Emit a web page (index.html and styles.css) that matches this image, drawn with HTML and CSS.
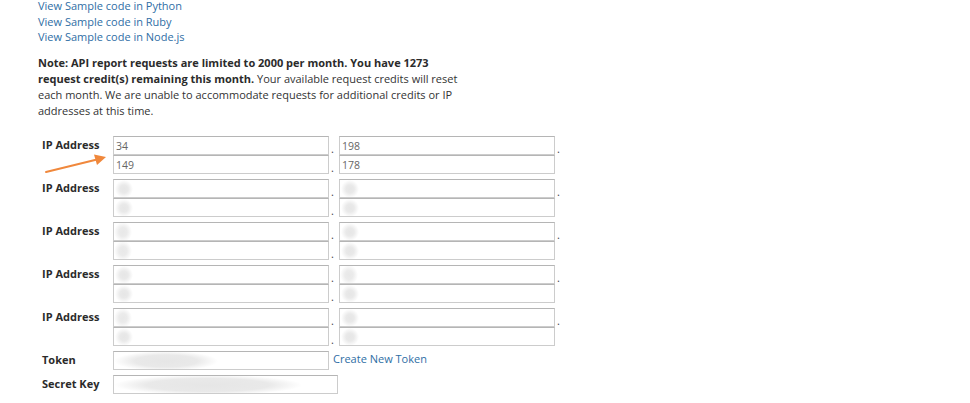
FILE: index.html
```html
<!DOCTYPE html>
<html>
<head>
<meta charset="utf-8">
<link rel="stylesheet" href="styles.css">
</head>
<body>
<div class="page">
  <div class="links">
    <a href="#">View Sample code in Python</a>
    <a href="#">View Sample code in Ruby</a>
    <a href="#">View Sample code in Node.js</a>
  </div>
  <p class="note"><b>Note: API report requests are limited to 2000 per month. You have 1273 request credit(s) remaining this month.</b> Your available request credits will reset each month. We are unable to accommodate requests for additional credits or IP addresses at this time.</p>

  <div class="form">
    <svg class="arrow" width="70" height="24" viewBox="0 0 70 24">
      <line x1="3" y1="19" x2="56" y2="6" stroke="#f0883c" stroke-width="2" stroke-linecap="round"/>
      <path d="M51 1.5 L63 4 L54 12 Z" fill="#f0883c"/>
    </svg>

    <div class="row">
      <div class="label">IP Address</div>
      <div class="ip">
        <input class="field" value="34"><span class="dot">.</span>
        <input class="field" value="198"><span class="dot">.</span>
        <input class="field" value="149"><span class="dot">.</span>
        <input class="field" value="178">
      </div>
    </div>

    <div class="row">
      <div class="label">IP Address</div>
      <div class="ip">
        <input class="field blob"><span class="dot">.</span>
        <input class="field blob"><span class="dot">.</span>
        <input class="field blob"><span class="dot">.</span>
        <input class="field blob">
      </div>
    </div>

    <div class="row">
      <div class="label">IP Address</div>
      <div class="ip">
        <input class="field blob blob-sm"><span class="dot">.</span>
        <input class="field blob"><span class="dot">.</span>
        <input class="field blob blob-sm"><span class="dot">.</span>
        <input class="field blob">
      </div>
    </div>

    <div class="row">
      <div class="label">IP Address</div>
      <div class="ip">
        <input class="field blob"><span class="dot">.</span>
        <input class="field blob blob-sm"><span class="dot">.</span>
        <input class="field blob"><span class="dot">.</span>
        <input class="field blob">
      </div>
    </div>

    <div class="row">
      <div class="label">IP Address</div>
      <div class="ip">
        <input class="field blob blob-sm"><span class="dot">.</span>
        <input class="field blob"><span class="dot">.</span>
        <input class="field blob"><span class="dot">.</span>
        <input class="field blob">
      </div>
    </div>

    <div class="row">
      <div class="label">Token</div>
      <div class="single">
        <input class="field token-field">
        <a href="#" class="create">Create New Token</a>
      </div>
    </div>

    <div class="row">
      <div class="label">Secret Key</div>
      <div class="single">
        <input class="field secret-field">
      </div>
    </div>

    <div class="row">
      <div class="label">Search Active</div>
      <div class="single check-line">
        <span class="check"></span>
        <span class="check-text">Transaction Summary</span>
      </div>
    </div>
  </div>
</div>
</body>
</html>
```

FILE: styles.css
```css
html, body {
  margin: 0;
  padding: 0;
  background: #ffffff;
  overflow: hidden;
}

body {
  font-family: "Open Sans", "Liberation Sans", sans-serif;
  font-size: 11px;
  line-height: 15.7px;
  color: #333333;
}

.page {
  padding-left: 38px;
  margin-top: -2px;
}

.links {
  display: flex;
  flex-direction: column;
}

.links a {
  color: #2f6ea5;
  text-decoration: none;
}

.note {
  width: 434px;
  margin: 10px 0 0 0;
  line-height: 16px;
}

.note b {
  font-weight: 700;
  color: #2b2b2b;
}

.form {
  position: relative;
  margin-top: 17px;
  padding-left: 4px;
  display: flex;
  flex-direction: column;
  gap: 5px;
}

.arrow {
  position: absolute;
  left: 5px;
  top: 17px;
}

.row {
  display: flex;
  align-items: flex-start;
}

.label {
  width: 71px;
  flex: none;
  font-weight: 700;
  color: #2b2b2b;
  line-height: 16px;
  padding-top: 1px;
}

.ip {
  display: flex;
  flex-wrap: wrap;
  width: 460px;
  align-items: flex-end;
}

.field {
  box-sizing: border-box;
  width: 216px;
  height: 19px;
  margin: 0;
  padding: 0 2px;
  border: 1px solid #cccccc;
  border-top-color: #b5b5b5;
  border-radius: 0;
  font-family: "Open Sans", "Liberation Sans", sans-serif;
  font-size: 10.5px;
  color: #666666;
  background: #ffffff;
  outline: none;
}

.dot {
  width: 10px;
  flex: none;
  padding-left: 2px;
  box-sizing: border-box;
  font-size: 11px;
  line-height: 11px;
  color: #444444;
  margin-bottom: 1px;
}

.blob {
  background: radial-gradient(circle at 10px 9px, #e6e6e6 0, #e9e9e9 4px, rgba(240,240,240,0) 9px) no-repeat #ffffff;
}

.blob-sm {
  background: radial-gradient(ellipse 9px 10px at 9px 9px, #e8e8e8 0, #ebebeb 45%, rgba(240,240,240,0) 100%) no-repeat #ffffff;
}

.single {
  display: flex;
  align-items: center;
  gap: 4px;
}

.token-field {
  width: 216px;
  background: radial-gradient(ellipse 52px 10px at 52px 9px, #e6e6e6 0, #e9e9e9 60%, rgba(240,240,240,0) 100%) no-repeat #ffffff;
}

.secret-field {
  width: 225px;
  background: radial-gradient(ellipse 94px 10px at 94px 9px, #e6e6e6 0, #e9e9e9 65%, rgba(240,240,240,0) 100%) no-repeat #ffffff;
}

.create {
  color: #2f6ea5;
  text-decoration: none;
  line-height: 16px;
  margin-top: -3px;
}

.check-line {
  gap: 5px;
  padding-top: 3px;
}

.check {
  width: 10px;
  height: 10px;
  border-radius: 2px;
  background: #2f7fe0;
  flex: none;
}

.check-text {
  line-height: 16px;
}
```
